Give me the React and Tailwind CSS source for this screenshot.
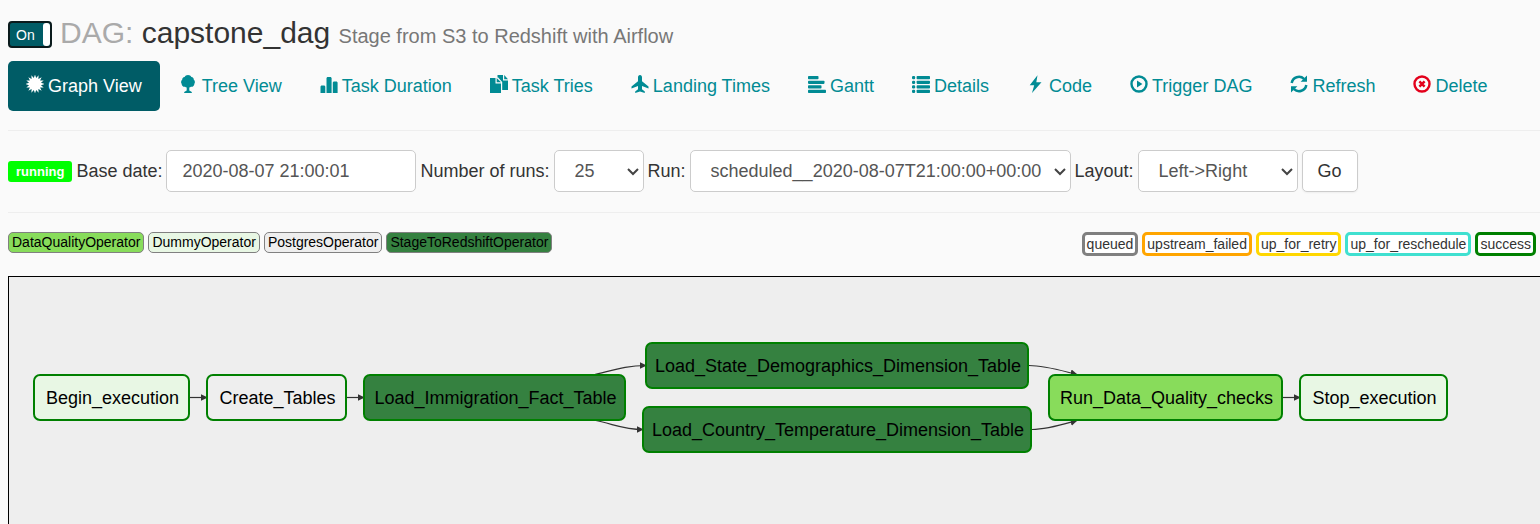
function Icon({ children, className }) {
  return (
    <svg
      viewBox="0 0 18 18"
      className={`size-[18px] shrink-0 -translate-y-0.5 ${className}`}
      fill="currentColor"
      aria-hidden="true"
    >
      {children}
    </svg>
  );
}

const burst = Array.from({ length: 32 }, (_, i) => {
  const r = i % 2 ? 6.1 : 9.4;
  const a = (Math.PI * i) / 16;
  return `${(9 + r * Math.sin(a)).toFixed(2)},${(9 - r * Math.cos(a)).toFixed(2)}`;
}).join(" ");

const icons = {
  burst: <polygon points={burst} />,
  tree: (
    <path d="M8 0C9.600 0 10.900.900 11.400 2.100C13 2.300 13.900 3.500 13.800 4.800C15 5.700 15.300 7.600 14.400 8.700C14.300 10.700 12.800 12 11 11.800C10.500 12.300 9.900 12.500 9.300 12.500V15.500L11.800 17V18H4.200V17L6.700 15.500V12.500C6.100 12.500 5.500 12.300 5 11.800C3.200 12 1.700 10.700 1.600 8.700C.7 7.600 1 5.700 2.200 4.800C2.100 3.500 3 2.300 4.600 2.100C5.100.9 6.400 0 8 0z" />
  ),
  stats: <path d="M.5 11.500l.8-1h3.200l.8 1V18H.5zM6.500 3l.8-1h3.500l.8 1v15H6.500zM12.800 7.500l.8-1h3.200l.8 1V18h-4.800z" />,
  copy: (
    <path d="M0 3h5.500v5.500H11V18H0zM6.700 3L11 7.300H6.700zM7.500 0H13v5.500h5V15h-5.800V7L8.200 2.600H7.500zM14.200 0L18 4.300h-3.800z" />
  ),
  plane: (
    <path d="M9 0c1.300 0 2 1.200 2 2.600v3.600l6.500 5.300v2L11 10.900v3.300l2.800 2.300V18L9 16.500 4.200 18v-1.500L7 14.200v-3.300L.5 13.500v-2L7 6.200V2.600C7 1.200 7.700 0 9 0z" />
  ),
  align: (
    <>
      <rect y="1" width="10.500" height="3.200" rx=".8" />
      <rect y="5.700" width="16.500" height="3.200" rx=".8" />
      <rect y="10.300" width="13.500" height="3.200" rx=".8" />
      <rect y="14.800" width="18" height="3.200" rx=".8" />
    </>
  ),
  list: [1, 5.7, 10.3, 14.8].map((y) => (
    <g key={y}>
      <rect y={y} width="3.200" height="3.200" rx="1.200" />
      <rect x="4.600" y={y} width="13.400" height="3.200" rx=".8" />
    </g>
  )),
  flash: <path d="M10.500.3L2.700 10.200h4.500L5 18l9.500-10.800H9.300z" />,
  play: (
    <>
      <circle cx="9" cy="9" r="7.500" fill="none" stroke="currentColor" strokeWidth="2.400" />
      <path d="M7 5.600L12.400 9 7 12.400z" />
    </>
  ),
  refresh: (
    <>
      <path
        d="M1.700 8A7.300 7.300 0 0 1 14 3.900M16.300 10A7.300 7.300 0 0 1 4 14.100"
        fill="none"
        stroke="currentColor"
        strokeWidth="2.500"
      />
      <path d="M17 .6v6.200h-6.400zM1 17.400v-6.200h6.400z" />
    </>
  ),
  remove: (
    <>
      <circle cx="9" cy="9" r="7.500" fill="none" stroke="currentColor" strokeWidth="2.400" />
      <path d="M6.400 6.400l5.200 5.200M11.600 6.400l-5.200 5.200" stroke="currentColor" strokeWidth="2.500" />
    </>
  ),
};

const tabs = [
  ["burst", "Graph View"],
  ["tree", "Tree View"],
  ["stats", "Task Duration"],
  ["copy", "Task Tries"],
  ["plane", "Landing Times"],
  ["align", "Gantt"],
  ["list", "Details"],
  ["flash", "Code"],
  ["play", "Trigger DAG"],
  ["refresh", "Refresh"],
  ["remove", "Delete"],
];

const operators = [
  ["DataQualityOperator", "bg-[#88dc5b]"],
  ["DummyOperator", "bg-[#e8f7e4]"],
  ["PostgresOperator", "bg-[#eeeeee]"],
  ["StageToRedshiftOperator", "bg-[#358140]"],
];

const states = [
  ["queued", "border-[#808080]"],
  ["upstream_failed", "border-[#ffa500]"],
  ["up_for_retry", "border-[#ffd700]"],
  ["up_for_reschedule", "border-[#40e0d0]"],
  ["success", "border-[#008000]"],
];

const nodes = [
  ["Begin_execution", "left-[24px] top-[97px] w-[157px] bg-[#e8f7e4]"],
  ["Create_Tables", "left-[197px] top-[97px] w-[141px] bg-[#eeeeee]"],
  ["Load_Immigration_Fact_Table", "left-[354px] top-[97px] w-[263px] bg-[#358140]"],
  ["Load_State_Demographics_Dimension_Table", "left-[636px] top-[65px] w-[384px] bg-[#358140]"],
  ["Load_Country_Temperature_Dimension_Table", "left-[633px] top-[129px] w-[390px] bg-[#358140]"],
  ["Run_Data_Quality_checks", "left-[1039px] top-[97px] w-[235px] bg-[#88dc5b]"],
  ["Stop_execution", "left-[1290px] top-[97px] w-[149px] bg-[#e8f7e4]"],
];

const edges = [
  "M181 120.500H198",
  "M338 120.500H355",
  "M584 98C605 93 617 88.500 637 88.500",
  "M584 143C605 147 614 152.500 634 152.500",
  "M1020 88.500C1036 88.500 1050 93 1068 97.500",
  "M1023 152.500C1038 152.500 1052 148 1068 143.500",
  "M1274 120.500H1291",
];

function Select({ id, value, width }) {
  return (
    <span className={`relative flex ${width}`}>
      <select
        id={id}
        defaultValue={value}
        className="h-[42px] w-full appearance-none rounded-[5px] border border-[#cccccc] bg-white pr-6 pl-5 text-[#555555]"
      >
        <option>{value}</option>
      </select>
      <svg
        viewBox="0 0 12 8"
        className="pointer-events-none absolute top-[18px] right-[5px] h-2 w-3"
        fill="none"
        stroke="#444444"
        strokeWidth="2"
        aria-hidden="true"
      >
        <path d="M1 1l5 5 5-5" />
      </svg>
    </span>
  );
}

export default function App() {
  return (
    <div className="flex min-h-screen flex-col overflow-x-hidden bg-[#fafafa] pl-2 font-['Liberation_Sans',Arial,sans-serif] text-[18px] leading-[26px] text-[#333333]">
      <header className="flex items-center gap-2 pt-4">
        <label className="flex h-[27px] w-11 shrink-0 items-center justify-between rounded-[4px] border-2 border-[#0a1a1c] bg-[#005c66] pl-1.5 text-[14px] text-white">
          <input type="checkbox" defaultChecked className="sr-only" aria-label="DAG enabled" />
          On
          <span className="h-full w-[7px] rounded-[3px] bg-white" />
        </label>
        <h1 className="text-[30px] leading-[33px] whitespace-nowrap">
          <span className="text-[#aaaaaa]">DAG:</span> capstone_dag{" "}
          <small className="text-[20px] text-[#777777]">Stage from S3 to Redshift with Airflow</small>
        </h1>
      </header>

      <nav className="mt-2 flex gap-0.5 text-[#018b94]">
        {tabs.map(([icon, label], i) => (
          <a
            key={label}
            href="#"
            className={
              i
                ? "flex items-center gap-1 rounded-[5px] px-[18px] py-3 whitespace-nowrap"
                : "flex items-center gap-1 rounded-[5px] bg-[#005c66] px-[18px] py-3 whitespace-nowrap text-white"
            }
          >
            <Icon className={icon === "remove" ? "text-[#e3001b]" : ""}>{icons[icon]}</Icon>
            {label}
          </a>
        ))}
      </nav>

      <hr className="mt-[19px] border-[#eeeeee]" />
      <form className="flex items-center gap-1 pt-[19px] pb-5 whitespace-nowrap">
        <span className="rounded-[3px] bg-[#00ff00] px-2 text-[13px] leading-[21px] font-bold text-white">
          running
        </span>
        <label htmlFor="base">Base date:</label>
        <input
          id="base"
          type="text"
          defaultValue="2020-08-07 21:00:01"
          className="h-[42px] w-[250px] rounded-[5px] border border-[#cccccc] bg-white px-[15px] text-[#555555]"
        />
        <label htmlFor="runs">Number of runs:</label>
        <Select id="runs" value="25" width="w-[90px]" />
        <label htmlFor="run">Run:</label>
        <Select id="run" value="scheduled__2020-08-07T21:00:00+00:00" width="w-[381px]" />
        <label htmlFor="layout">Layout:</label>
        <Select id="layout" value="Left->Right" width="w-[160px]" />
        <button type="button" className="h-[42px] rounded-[5px] border border-[#cccccc] bg-white px-[15px] shadow-xs">
          Go
        </button>
      </form>
      <hr className="border-[#eeeeee]" />

      <div className="mt-[19px] mb-5 flex items-start justify-between pr-1 text-[14px] leading-[19px]">
        <div className="flex gap-1 text-black">
          {operators.map(([name, bg]) => (
            <span key={name} className={`rounded-[5px] border border-[#808080] px-[3px] ${bg}`}>
              {name}
            </span>
          ))}
        </div>
        <div className="flex gap-1">
          {states.map(([name, border]) => (
            <span key={name} className={`rounded-[5px] border-3 bg-white px-0.5 leading-[18px] ${border}`}>
              {name}
            </span>
          ))}
        </div>
      </div>

      <main className="relative flex-1 border-t border-l border-black bg-[#eeeeee]">
        <svg className="absolute top-0 left-0 h-[246px] w-[1520px]" aria-hidden="true">
          <defs>
            <marker id="arrow" viewBox="0 0 10 10" refX="9" refY="5" markerWidth="6" markerHeight="6" orient="auto">
              <path d="M0 0L10 5L0 10z" fill="#333333" />
            </marker>
          </defs>
          {edges.map((d) => (
            <path key={d} d={d} fill="none" stroke="#333333" strokeWidth="1.200" markerEnd="url(#arrow)" />
          ))}
        </svg>
        {nodes.map(([name, place]) => (
          <div
            key={name}
            className={`absolute flex h-[47px] items-center justify-center rounded-[7px] border-2 border-[#008000] pl-0.5 whitespace-nowrap text-black ${place}`}
          >
            {name}
          </div>
        ))}
      </main>
    </div>
  );
}
